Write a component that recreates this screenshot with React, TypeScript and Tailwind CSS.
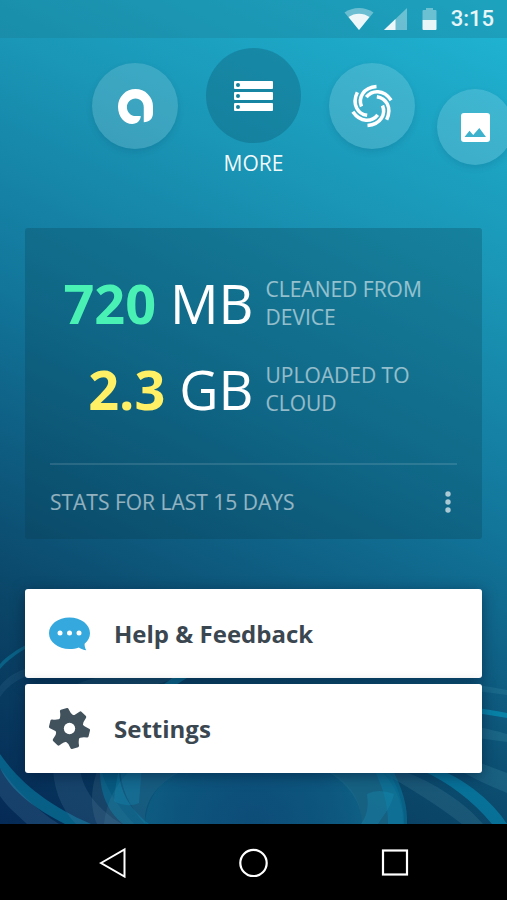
import type { ReactNode } from 'react';
import clsx from 'clsx';

const GEAR_TEETH = [14, 74, 134, 194, 254, 314];
const SWIRL_ARMS = [0, 60, 120, 180, 240, 300];

function StatusBar() {
  return (
    <header className="relative z-10 flex h-[38px] items-center justify-end bg-[#1a7f95]/35 pr-[13px] text-white">
      <svg viewBox="0 0 30 22" className="mr-[10px] h-[22px] w-[30px]" fill="currentColor">
        <path d="M15 22 L0.5 4.5 C9 -1.5 21 -1.5 29.5 4.5 Z" opacity=".35" />
        <path d="M15 22 L4.5 9 C10.500 4.500 19.500 4.500 25.500 9 Z" opacity=".88" />
      </svg>
      <svg viewBox="0 0 23 22" className="mr-[15px] h-[22px] w-[23px]" fill="currentColor">
        <path d="M23 0 V22 H0 Z" opacity=".35" />
        <path d="M11.500 11 V22 H0 Z" opacity=".88" />
      </svg>
      <svg viewBox="0 0 15 22" className="mr-[14px] h-[22px] w-[15px]" fill="currentColor">
        <path d="M4 0 H11 V2 H13.500 Q14.500 2 14.500 3 V12 H0.500 V3 Q0.500 2 1.500 2 H4 Z" opacity=".35" />
        <path d="M0.500 12 H14.500 V21 Q14.500 22 13.500 22 H1.500 Q0.500 22 0.500 21 Z" opacity=".9" />
      </svg>
      <span className="font-['Roboto',sans-serif] text-[22px] leading-6 font-medium text-white/90">3:15</span>
    </header>
  );
}

/* Light ribbons behind the lower part of the page */
function Ribbons() {
  return (
    <svg
      viewBox="0 0 507 264"
      preserveAspectRatio="none"
      className="pointer-events-none absolute inset-x-0 bottom-0 h-[264px] w-full"
      aria-hidden="true"
    >
      <defs>
        <radialGradient id="glow" gradientUnits="userSpaceOnUse" cx="253" cy="262" r="130">
          <stop offset="0" stopColor="#0d4a78" />
          <stop offset=".6" stopColor="#0d567f" />
          <stop offset="1" stopColor="#10698c" stopOpacity=".9" />
        </radialGradient>
      </defs>
      {/* left side */}
      <path d="M0 104 C7 96 16 90 30 83 V86 C17 93 7 101 0 109 Z" fill="#0a83a8" opacity=".5" />
      <path d="M0 126 C8 116 18 110 40 104 V111 C20 117 8 125 0 137 Z" fill="#5b93b0" opacity=".13" />
      <path d="M156 130 L175 116 H190 L168 130 Z" fill="#0b86ad" opacity=".7" />
      <path d="M70 128 C80 122 90 119 100 117 H180 L140 130 Z" fill="#6ba0b4" opacity=".14" />
      <path d="M0 194 C18 220 45 244 91 264 H65 C34 248 12 232 0 208 Z" fill="#0779a0" opacity=".65" />
      <path d="M0 208 C16 230 34 248 59 264 H27 C14 252 6 245 0 236 Z" fill="#4f7fa6" opacity=".24" />
      <path d="M53 205 H80 C80 228 98 250 122 264 H76 C60 248 53 226 53 205 Z" fill="#4d7aa0" opacity=".24" />
      <path d="M100 205 C90 225 90 248 97 264 H134 C116 245 104 225 100 205 Z" fill="#6a8fa8" opacity=".18" />
      {/* right side */}
      <path d="M470 124 C485 126 497 128 507 130 V135 L470 130 Z" fill="#4fa0b5" opacity=".18" />
      <path d="M470 147 C485 149 497 151 507 153 V158 C496 156 482 154 470 152 Z" fill="#078fb6" opacity=".75" />
      <path d="M470 166 C485 168 497 171 507 174 V182 L470 177 Z" fill="#4fa0b5" opacity=".2" />
      <path d="M470 199 L507 213 V233 C490 226 475 219 460 211 Z" fill="#4fa0b5" opacity=".2" />
      <path d="M423 211 H443 C468 222 493 242 507 264 H492 C473 241 448 222 423 211 Z" fill="#0782aa" opacity=".7" />
      <path d="M380 211 H402 C435 222 466 244 483 264 H462 C437 245 410 228 380 211 Z" fill="#5d9bb0" opacity=".18" />
      {/* centre dome */}
      <path d="M120 205 H385 C400 228 404 248 404 264 H145 C130 248 120 228 120 205 Z" fill="#106a8e" opacity=".55" />
      <path d="M145 264 C147 236 162 218 190 205 H317 C347 218 361 236 362 264 Z" fill="url(#glow)" opacity=".7" />
      <path d="M100 205 H119 C118 228 128 248 149 264 H123 C106 250 99 230 100 205 Z" fill="#08799e" opacity=".55" />
      <path d="M104 264 C107 240 117 220 137 205 H195 C164 217 143 236 145 264 Z" fill="#5aa5b8" opacity=".13" />
      <path d="M120 205 H142 L139 243 C130 247 120 245 114 241 C115 228 117 218 120 205 Z" fill="#168bb3" opacity=".32" />
      <path d="M315 205 H375 C393 220 404 242 403 264 H362 C362 239 344 218 315 205 Z" fill="#5aa5b8" opacity=".12" />
      <path d="M372 205 H390 C403 228 408 248 407 264 H388 C388 242 382 225 372 205 Z" fill="#087da6" opacity=".5" />
      <path d="M367 234 Q378 228 394 234 C391 248 382 257 378 264 H361 C369 253 368 243 367 234 Z" fill="#168bb3" opacity=".35" />
    </svg>
  );
}

function DriveIcon() {
  return (
    <svg viewBox="0 0 106 106" className="size-[35px]" fill="currentColor">
      <path d="M106 53 A53 53 0 0 0 53 0 A53 53 0 0 0 0 53 C0 85 20 106 43 106 C58 106 68 96 69 82 L54 82 C39 82 27 70 27 55 C27 40 39 29 53 29 C68 29 78 40 78 55 V101 C95 101 106 90 106 73 Z" />
    </svg>
  );
}

function StorageIcon() {
  return (
    <svg viewBox="0 0 39 30" className="h-[30px] w-[39px]" fill="currentColor">
      {[0, 11, 22].map((y) => (
        <g key={y}>
          <rect y={y} width="39" height="8" rx="1" />
          <circle cx="4" cy={y + 4} r="2" fill="#16809c" />
        </g>
      ))}
    </svg>
  );
}

function SwirlIcon() {
  return (
    <svg viewBox="-22 -22 44 44" className="size-11" fill="none" stroke="currentColor" strokeWidth="3.5">
      {SWIRL_ARMS.map((angle) => (
        <path key={angle} d="M-10.500 0.500 C-14 -8 -9 -18.500 4.500 -19.500" transform={`rotate(${angle})`} />
      ))}
    </svg>
  );
}

function PhotoIcon() {
  return (
    <svg viewBox="0 0 29 29" className="size-[29px]" fill="currentColor">
      <path
        fillRule="evenodd"
        d="M3 0 H26 Q29 0 29 3 V26 Q29 29 26 29 H3 Q0 29 0 26 V3 Q0 0 3 0 Z M3.500 24 H25 L18.300 15 L12.200 22 L8.500 17.700 Z"
      />
    </svg>
  );
}

function ChatIcon() {
  return (
    <svg viewBox="0 0 41 34" className="h-[34px] w-[41px]">
      <path
        fill="#35a8dd"
        d="M20.500 0.500 C9 0.500 0 7.500 0 16.300 C0 25 9 32 20.500 32 C24 32 27 31.500 29.800 30.500 C32 32 34.500 33 37.300 33.300 C36 31 35.500 29 35.600 26.700 C39 24 41 20.300 41 16.300 C41 7.500 32 0.500 20.500 0.500 Z"
      />
      <g fill="#fff">
        <circle cx="11" cy="16" r="2.5" />
        <circle cx="20.500" cy="16" r="2.5" />
        <circle cx="30" cy="16" r="2.5" />
      </g>
    </svg>
  );
}

function GearIcon() {
  return (
    <svg viewBox="-21 -21 42 42" className="size-[41px]" fill="#42525d">
      <circle r="14" />
      {GEAR_TEETH.map((angle) => (
        <path
          key={angle}
          d="M10 -8.500 Q14 -5 19.500 -4.600 Q20.800 -4.400 20.900 -3.200 V3.200 Q20.800 4.400 19.500 4.600 Q14 5 10 8.500 Z"
          transform={`rotate(${angle})`}
        />
      ))}
      <circle r="5.800" fill="#fff" />
    </svg>
  );
}

interface BubbleProps {
  label: string;
  className: string;
  children: ReactNode;
}

function Bubble({ label, className, children }: BubbleProps) {
  return (
    <button
      type="button"
      aria-label={label}
      className={clsx('flex shrink-0 items-center justify-center rounded-full', className)}
    >
      {children}
    </button>
  );
}

interface StatProps {
  value: string;
  unit: string;
  label: string;
  color: string;
}

function Stat({ value, unit, label, color }: StatProps) {
  return (
    <div className="grid grid-cols-2 items-center">
      <p className="text-right text-[54px] leading-14 whitespace-nowrap text-white">
        <span className={clsx('font-bold', color)}>{value}</span> {unit}
      </p>
      <p className="pl-3 text-[21px] leading-7 text-white/55">{label}</p>
    </div>
  );
}

function MenuItem({ icon, label }: { icon: ReactNode; label: string }) {
  return (
    <button
      type="button"
      className="flex h-[89px] w-full items-center gap-6 rounded-[3px] bg-white pl-6 text-left text-[24px] font-bold text-[#3b4750] shadow-[0_3px_14px_rgba(0,20,50,0.5)]"
    >
      {icon}
      <span>{label}</span>
    </button>
  );
}

function NavBar() {
  return (
    <nav className="grid h-[76px] grid-cols-3 items-center bg-black px-[42px] text-white">
      <button type="button" aria-label="Back" className="flex justify-center">
        <svg viewBox="0 0 28 32" className="h-8 w-7" fill="none" stroke="currentColor" strokeWidth="2">
          <path d="M2 17 L25.500 3.500 V30.500 Z" />
        </svg>
      </button>
      <button type="button" aria-label="Home" className="flex justify-center">
        <svg viewBox="0 0 30 30" className="size-[30px]" fill="none" stroke="currentColor" strokeWidth="2.2">
          <circle cx="14.500" cy="16" r="13.200" />
        </svg>
      </button>
      <button type="button" aria-label="Recent apps" className="flex justify-center">
        <svg viewBox="0 0 28 28" className="size-7" fill="none" stroke="currentColor" strokeWidth="2.2">
          <rect x="2" y="2.500" width="24" height="24" />
        </svg>
      </button>
    </nav>
  );
}

export default function App() {
  return (
    <div className="flex min-h-screen flex-col font-['Open_Sans',sans-serif]">
      <div className="relative isolate flex flex-1 flex-col overflow-hidden bg-[linear-gradient(206deg,#20b6d5_0%,#1a95b5_27%,#12759a_50%,#0d577b_68%,#0a4466_80%,#052a55_100%)]">
        <Ribbons />
        <StatusBar />

        <main className="relative flex flex-1 flex-col">
          {/* Section picker */}
          <div className="flex items-start overflow-hidden pt-[10px] pl-[92px]">
            <Bubble label="Drive" className="mt-[15px] mr-7 size-[86px] bg-white/15 text-white shadow-[0_3px_6px_rgba(0,60,90,0.15)]">
              <DriveIcon />
            </Bubble>
            <div className="mr-7 flex shrink-0 flex-col items-center gap-[6px]">
              <Bubble label="Storage" className="size-[95px] bg-[#0b5a74]/35 text-white">
                <StorageIcon />
              </Bubble>
              <span className="text-[21px] leading-7 text-white/95">MORE</span>
            </div>
            <Bubble label="Optimize" className="mt-[15px] mr-[22px] size-[86px] bg-white/15 text-white shadow-[0_3px_6px_rgba(0,60,90,0.15)]">
              <SwirlIcon />
            </Bubble>
            <Bubble label="Photos" className="mt-[41px] size-[76px] bg-white/15 text-white shadow-[0_3px_6px_rgba(0,60,90,0.15)]">
              <PhotoIcon />
            </Bubble>
          </div>

          {/* Stats */}
          <section className="mx-[25px] mt-[51px] rounded-[3px] bg-[#083646]/25 px-[25px]">
            <div className="flex flex-col gap-[30px] pt-[47px] pb-[46px]">
              <Stat value="720" unit="MB" label="CLEANED FROM DEVICE" color="text-[#49f2b4]" />
              <Stat value="2.3" unit="GB" label="UPLOADED TO CLOUD" color="text-[#fff066]" />
            </div>
            <div className="flex h-[76px] items-center justify-between border-t-2 border-white/12 pt-[2px] text-[21px] text-white/55">
              <span>STATS FOR LAST 15 DAYS</span>
              <button type="button" aria-label="Stats options" className="mr-1 text-white/65">
                <svg viewBox="0 0 10 24" className="h-6 w-[10px]" fill="currentColor">
                  <circle cx="5" cy="3" r="2.700" />
                  <circle cx="5" cy="11" r="2.700" />
                  <circle cx="5" cy="19" r="2.700" />
                </svg>
              </button>
            </div>
          </section>

          {/* Menu */}
          <div className="mx-[25px] mt-[50px] mb-[51px] flex flex-col gap-[6px]">
            <MenuItem icon={<ChatIcon />} label="Help & Feedback" />
            <MenuItem icon={<GearIcon />} label="Settings" />
          </div>
        </main>
      </div>
      <NavBar />
    </div>
  );
}
